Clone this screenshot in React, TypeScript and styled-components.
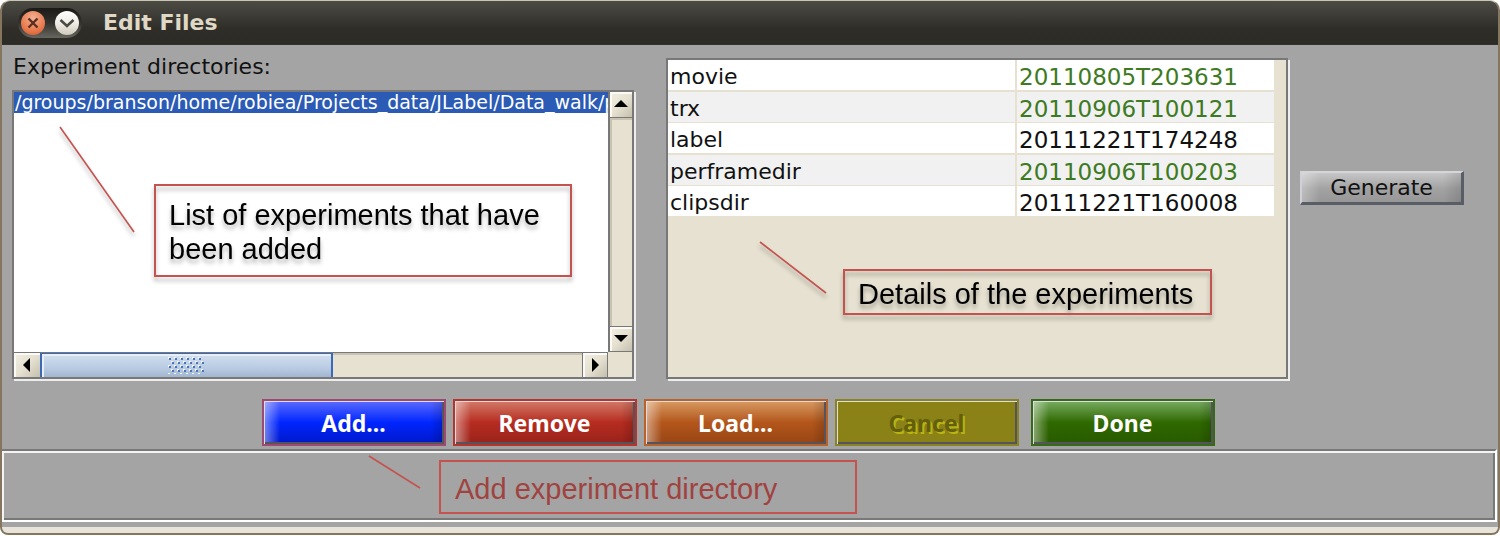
import React from "react";
import styled, { createGlobalStyle, css } from "styled-components";

const GlobalStyle = createGlobalStyle`
  * { box-sizing: border-box; }
  body {
    margin: 0;
    background: #fff;
    font-family: "DejaVu Sans", sans-serif;
    color: #111;
  }
  button { font: inherit; cursor: pointer; padding: 0; }
`;

const face = "#a4a4a4";
const cream = "#e6e1d0";
const shade = "#787878";

const Window = styled.main`
  display: flex;
  flex-direction: column;
  overflow: hidden;
  border: 2px solid #857660;
  border-top: 1px solid #c9c5b4;
  border-radius: 10px 10px 8px 8px;
  background: ${face};
`;

const TitleBar = styled.header`
  display: flex;
  align-items: center;
  gap: 21px;
  height: 44px;
  padding: 0 16px;
  background: linear-gradient(#4c4b44, #2f2d28 65%, #2d2b26);
  border-bottom: 1px solid #33322d;
`;

const Title = styled.h1`
  margin: 0;
  padding-top: 1px;
  font-size: 22px;
  line-height: 26px;
  font-weight: 700;
  color: #dfd8c6;
`;

const WindowControls = styled.div`
  display: flex;
  align-items: center;
  justify-content: space-between;
  width: 64px;
  height: 30px;
  padding: 0 3px;
  border-radius: 15px;
  background: linear-gradient(#1b1a17, #33322e 50%, #66655e);
`;

const RoundButton = styled.button<{ $tone: "close" | "fold" }>`
  display: grid;
  place-items: center;
  width: 24px;
  height: 24px;
  border: 0;
  border-radius: 50%;
  background: ${(p) =>
    p.$tone === "close"
      ? "radial-gradient(circle at 50% 30%, #f4b193, #e8794d 60%, #c9542b)"
      : "linear-gradient(#ffffff, #efede6 50%, #cfcabb)"};
`;

const Content = styled.section`
  display: flex;
  flex-direction: column;
  gap: 20px;
  padding: 9px 34px 3px 10px;
`;

const Columns = styled.div`
  display: grid;
  grid-template-columns: minmax(0, 1fr) 8px minmax(0, 1fr) 164px;
  column-gap: 12px;
`;

const Column = styled.div`
  position: relative;
  display: flex;
  flex-direction: column;
  gap: 10px;
`;

const DirectoryColumn = styled(Column)`
  grid-column: 1;
`;

const DetailColumn = styled(Column)`
  grid-column: 3;
  padding-top: 4px;
`;

const ActionColumn = styled(Column)`
  grid-column: 4;
  padding-top: 117px;
`;

const Heading = styled.h2`
  margin: 0;
  padding-left: 1px;
  font-size: 22px;
  line-height: 26px;
  font-weight: 400;
`;

const sunken = css`
  border: 2px solid ${shade};
  box-shadow: 2px 2px 0 #ededed;
`;

const ListFrame = styled.div`
  ${sunken}
  display: grid;
  grid-template-columns: minmax(0, 1fr) 24px;
  grid-template-rows: 260px 25px;
  background: ${cream};
`;

const List = styled.ul`
  margin: 0;
  padding: 0;
  list-style: none;
  overflow: hidden;
  background: #fff;
`;

const ListItem = styled.li`
  padding-left: 1px;
  font-size: 19px;
  line-height: 21px;
  white-space: nowrap;
  color: #fff;
  background: #2b5bb4;
`;

const VerticalBar = styled.div`
  display: flex;
  flex-direction: column;
  justify-content: space-between;
  border-left: 2px solid ${shade};
`;

const HorizontalBar = styled.div`
  display: flex;
  border-top: 1px solid ${shade};
`;

const ArrowButton = styled.button<{ $edge: "top" | "right" | "bottom" | "left" }>`
  display: grid;
  place-items: center;
  flex: none;
  width: 26px;
  height: 26px;
  border: 0;
  background: linear-gradient(135deg, #f2efe4, #e6e1d0 50%, #c5c0ae);
  box-shadow: inset 2px 2px 0 #fbfaf5;
  ${(p) => (p.$edge === "top" || p.$edge === "bottom") && "width: 22px;"}
  ${(p) => (p.$edge === "left" || p.$edge === "right") && "height: 24px;"}
  ${(p) => p.$edge === "top" && `border-bottom: 1px solid ${shade};`}
  ${(p) => p.$edge === "bottom" && `border: solid ${shade}; border-width: 1px 0;`}
  ${(p) => p.$edge === "right" && `border: solid ${shade}; border-width: 0 1px;`}
`;

const Track = styled.div`
  flex: 1;
  box-shadow: inset 2px 2px 0 #c9c4b2;
`;

const Thumb = styled.div`
  display: grid;
  place-items: center;
  width: 54%;
  height: 24px;
  border: 2px solid #3c68b8;
  border-top-width: 1px;
  border-bottom: 0;
  background: linear-gradient(#d3dfee, #b9cce3 60%, #a3b6d0);
  box-shadow: inset 2px 2px 0 #e6eef8;
`;

const DetailFrame = styled.div`
  ${sunken}
  height: 321px;
  padding-right: 12px;
  background: ${cream};
`;

const DetailTable = styled.table`
  width: 100%;
  table-layout: fixed;
  border-collapse: separate;
  border-spacing: 0;
`;

const cell = css`
  height: 30px;
  padding: 4px 0 0 2px;
  line-height: 26px;
  font-weight: 400;
  text-align: left;
  background-clip: padding-box;
`;

const NameCell = styled.th`
  ${cell}
  font-size: 22px;
  border-right: 2px solid ${cream};
`;

const DateCell = styled.td<{ $fresh: boolean }>`
  ${cell}
  width: 257px;
  font-size: 23px;
  color: ${(p) => (p.$fresh ? "#3d7a22" : "#111")};
`;

const DetailRow = styled.tr`
  > * { background-color: #fff; border-bottom: 2px solid ${cream}; }
  &:nth-child(even) > * { background-color: #f1f1f1; border-bottom-width: 1px; }
  &:last-child > * { border-bottom: 0; }
`;

const GenerateButton = styled.button`
  height: 34px;
  border: solid;
  border-width: 2px 3px 3px 2px;
  border-color: #d5d5da #595d66 #595d66 #d0d0d8;
  font-size: 22px;
  line-height: 26px;
  color: #111;
  background:
    linear-gradient(90deg, rgba(255, 255, 255, 0.3), transparent 18px),
    linear-gradient(270deg, rgba(0, 0, 0, 0.12), transparent 18px),
    linear-gradient(#c6c6c6, #a2a2a2 55%, #979797);
`;

const ButtonRow = styled.div`
  display: flex;
  justify-content: center;
  gap: 7px;
`;

const ColourButton = styled.button<{ $edge: string; $light: string; $main: string; $deep: string }>`
  width: 184px;
  height: 47px;
  border: 2px solid ${(p) => p.$edge};
  font-family: "Noto Sans", sans-serif;
  font-size: 23px;
  line-height: 30px;
  font-weight: 700;
  color: #fff;
  background:
    linear-gradient(90deg, rgba(255, 255, 255, 0.45), transparent 16px),
    linear-gradient(270deg, rgba(0, 0, 0, 0.18), transparent 14px),
    linear-gradient(${(p) => p.$light}, ${(p) => p.$main} 50%, ${(p) => p.$deep});
  background-clip: padding-box;
  box-shadow: inset 1px 1px 0 #dcdce4, inset -2px -2px 0 #55545c;

  &:disabled {
    color: #655e0e;
    text-shadow: 2px 2px 0 #b8b512;
    background: ${(p) => p.$main};
  }
  &:last-child { margin-left: 5px; }
`;

const StatusPanel = styled.section`
  position: relative;
  height: 73px;
  margin-right: 1px;
  border: solid;
  border-width: 2px 2px 2px 0;
  border-color: ${shade} #fff #fff;
  box-shadow: inset 2px 2px 0 #f4f4f4, inset -2px -2px 0 ${shade};
`;

const BottomEdge = styled.footer`
  height: 6px;
  margin-top: 5px;
  background: #e9e4d9;
`;

const Callout = styled.p<{ $x: number; $y: number; $w: number; $pad: string; $flat?: boolean }>`
  position: absolute;
  left: ${(p) => p.$x}px;
  top: ${(p) => p.$y}px;
  width: ${(p) => p.$w}px;
  margin: 0;
  padding: ${(p) => p.$pad};
  border: 2px solid #c4524f;
  font-family: "Liberation Sans", sans-serif;
  font-size: 29px;
  line-height: 34px;
  color: ${(p) => (p.$flat ? "#a04340" : "#000")};
  filter: ${(p) => (p.$flat ? "none" : "drop-shadow(0 4px 2px rgba(0, 0, 0, 0.3))")};
`;

const Pointer = styled.svg<{ $x: number; $y: number; $flat?: boolean }>`
  position: absolute;
  left: ${(p) => p.$x}px;
  top: ${(p) => p.$y}px;
  overflow: visible;
  stroke: #c4524f;
  stroke-width: 1.6;
  filter: ${(p) => (p.$flat ? "none" : "drop-shadow(0 4px 2px rgba(0, 0, 0, 0.3))")};
`;

const arrows = {
  top: "M0 9 7 2 14 9Z",
  bottom: "M0 3 14 3 7 10Z",
  left: "M10 0 10 14 3 7Z",
  right: "M4 0 4 14 11 7Z",
};

function Arrow({ edge, label }: { edge: keyof typeof arrows; label: string }) {
  return (
    <ArrowButton type="button" $edge={edge} aria-label={label}>
      <svg width="14" height="14" viewBox="0 0 14 14">
        <path d={arrows[edge]} fill="#000" />
      </svg>
    </ArrowButton>
  );
}

function Grip() {
  return (
    <svg width="36" height="17">
      <defs>
        <pattern id="grip" width="6" height="8" patternUnits="userSpaceOnUse">
          <path d="M0 0h2v2h-2zM3 4h2v2h-2z" fill="#f3f7fc" />
          <path d="M1 1h2v2h-2zM4 5h2v2h-2z" fill="#4a74bd" />
        </pattern>
      </defs>
      <rect width="36" height="17" fill="url(#grip)" />
    </svg>
  );
}

const details = [
  { name: "movie", date: "20110805T203631", fresh: true },
  { name: "trx", date: "20110906T100121", fresh: true },
  { name: "label", date: "20111221T174248", fresh: false },
  { name: "perframedir", date: "20110906T100203", fresh: true },
  { name: "clipsdir", date: "20111221T160008", fresh: false },
];

const actions = [
  { label: "Add...", edge: "#9c4a72", light: "#5b6bff", main: "#0026ff", deep: "#0018c8" },
  { label: "Remove", edge: "#b5342c", light: "#d27a68", main: "#b62c20", deep: "#98221a" },
  { label: "Load...", edge: "#b8622c", light: "#d79a62", main: "#b3561b", deep: "#984514" },
  { label: "Cancel", edge: "#8a8324", light: "#8a8216", main: "#8a8216", deep: "#8a8216", disabled: true },
  { label: "Done", edge: "#376a14", light: "#78ab62", main: "#2f6900", deep: "#285a00" },
];

export default function App() {
  return (
    <>
      <GlobalStyle />
      <Window>
        <TitleBar>
          <WindowControls>
            <RoundButton type="button" $tone="close" aria-label="Close">
              <svg width="12" height="12" viewBox="0 0 12 12">
                <path d="M1.500 1.500 10.500 10.500M10.500 1.500 1.500 10.500" stroke="#5b3020" strokeWidth="2.4" />
              </svg>
            </RoundButton>
            <RoundButton type="button" $tone="fold" aria-label="Minimise">
              <svg width="16" height="12" viewBox="0 0 16 12">
                <path d="M1.500 3 8 9 14.500 3" stroke="#4c4a45" strokeWidth="2.600" fill="none" />
              </svg>
            </RoundButton>
          </WindowControls>
          <Title>Edit Files</Title>
        </TitleBar>

        <Content>
          <Columns>
            <DirectoryColumn>
              <Heading id="directories">Experiment directories:</Heading>
              <ListFrame>
                <List role="listbox" aria-labelledby="directories">
                  <ListItem role="option" aria-selected="true">
                    /groups/branson/home/robiea/Projects_data/JLabel/Data_walk/p
                  </ListItem>
                </List>
                <VerticalBar>
                  <Arrow edge="top" label="Scroll up" />
                  <Track />
                  <Arrow edge="bottom" label="Scroll down" />
                </VerticalBar>
                <HorizontalBar>
                  <Arrow edge="left" label="Scroll left" />
                  <Track>
                    <Thumb>
                      <Grip />
                    </Thumb>
                  </Track>
                  <Arrow edge="right" label="Scroll right" />
                </HorizontalBar>
              </ListFrame>
              <Pointer $x={48} $y={73} width="74" height="105">
                <path d="M0 0 74 105" />
              </Pointer>
              <Callout $x={142} $y={130} $w={418} $pad="12px 13px 9px">
                List of experiments that have been added
              </Callout>
            </DirectoryColumn>

            <DetailColumn>
              <DetailFrame>
                <DetailTable aria-label="Experiment files">
                  <tbody>
                    {details.map((d) => (
                      <DetailRow key={d.name}>
                        <NameCell scope="row">{d.name}</NameCell>
                        <DateCell $fresh={d.fresh}>{d.date}</DateCell>
                      </DetailRow>
                    ))}
                  </tbody>
                </DetailTable>
              </DetailFrame>
              <Pointer $x={94} $y={188} width="66" height="51">
                <path d="M0 0 66 51" />
              </Pointer>
              <Callout $x={177} $y={215} $w={369} $pad="6px 12px 2px 13px">
                Details of the experiments
              </Callout>
            </DetailColumn>

            <ActionColumn>
              <GenerateButton type="button">Generate</GenerateButton>
            </ActionColumn>
          </Columns>

          <ButtonRow>
            {actions.map((a) => (
              <ColourButton
                key={a.label}
                type="button"
                disabled={a.disabled}
                $edge={a.edge}
                $light={a.light}
                $main={a.main}
                $deep={a.deep}
              >
                {a.label}
              </ColourButton>
            ))}
          </ButtonRow>
        </Content>

        <StatusPanel aria-label="Status">
          <Pointer $x={367} $y={5} $flat width="51" height="32">
            <path d="M0 0 51 32" />
          </Pointer>
          <Callout $x={437} $y={9} $w={418} $pad="10px 14px 6px" $flat>
            Add experiment directory
          </Callout>
        </StatusPanel>
        <BottomEdge />
      </Window>
    </>
  );
}
